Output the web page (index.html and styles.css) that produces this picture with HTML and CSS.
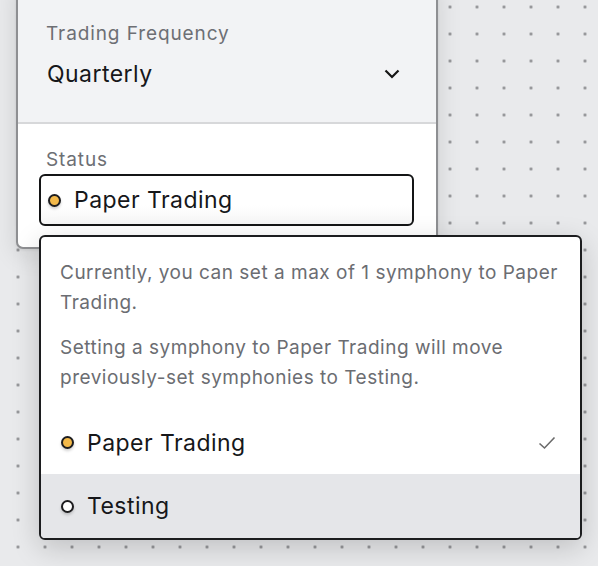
FILE: index.html
```html
<!DOCTYPE html>
<html>
<head>
<meta charset="utf-8">
<link rel="stylesheet" href="styles.css">
</head>
<body>
<div class="canvas">
  <div class="panel">
    <div class="section section-top">
      <div class="label">Trading Frequency</div>
      <div class="plain-select">
        <span class="value">Quarterly</span>
        <svg class="chevron" width="16" height="10" viewBox="0 0 16 10"><path d="M1.5 1.5 L8 8 L14.5 1.5" fill="none" stroke="#151515" stroke-width="2.2"/></svg>
      </div>
    </div>
    <div class="section section-bottom">
      <div class="label">Status</div>
      <div class="status-wrap">
        <div class="status-select">
          <span class="dot dot-paper"></span>
          <span class="value">Paper Trading</span>
        </div>
        <div class="popover">
          <div class="notes">
            <p>Currently, you can set a max of 1 symphony to Paper Trading.</p>
            <p>Setting a symphony to Paper Trading will move <span class="nowrap">previously-set</span> symphonies to Testing.</p>
          </div>
          <div class="option">
            <span class="dot dot-paper"></span>
            <span class="value">Paper Trading</span>
            <svg class="check" width="18" height="14" viewBox="0 0 18 14"><path d="M1.5 7.5 L6.5 12 L16.5 1.5" fill="none" stroke="#6a6a6a" stroke-width="1.6"/></svg>
          </div>
          <div class="option option-hover">
            <span class="dot dot-testing"></span>
            <span class="value">Testing</span>
          </div>
        </div>
      </div>
    </div>
  </div>
</div>
</body>
</html>
```

FILE: styles.css
```css
* { box-sizing: border-box; }
html, body {
  margin: 0;
  padding: 0;
  height: 100%;
}
body {
  font-family: Inter, "Noto Sans", sans-serif;
  background-color: #e9eaec;
  background-image: radial-gradient(circle, #8d8e91 1.1px, rgba(141,142,145,0) 1.8px);
  background-size: 27px 27px;
  background-position: 4.5px -6.5px;
  overflow: hidden;
}
.canvas {
  padding-left: 16px;
}
.panel {
  width: 422px;
  margin-top: -20px;
  border: 2px solid #8e8f92;
  border-radius: 7px;
  background: #fff;
  box-shadow: 0 6px 24px rgba(0,0,0,0.12), 0 1px 3px rgba(0,0,0,0.08);
  position: relative;
}
.section-top {
  background: #f2f3f5;
  border-bottom: 2px solid #d7d8da;
  padding: 39px 36px 0 28px;
  height: 142px;
  border-radius: 5px 5px 0 0;
}
.label {
  font-size: 19px;
  color: #6d6f74;
  letter-spacing: 0.9px;
  line-height: 26px;
}
.section-top .label {
  margin-bottom: 13px;
}
.plain-select {
  display: flex;
  align-items: center;
  justify-content: space-between;
  height: 28px;
}
.value {
  font-size: 23px;
  color: #16171a;
  letter-spacing: 0.45px;
}
.plain-select .value { margin-left: 1px; }
.chevron { margin-right: 0; }
.section-bottom {
  padding: 23px 22px 21px 21px;
  border-radius: 0 0 5px 5px;
}
.section-bottom .label {
  padding-left: 7px;
  margin-bottom: 1px;
}
.status-wrap {
  position: relative;
}
.status-select {
  height: 52px;
  border: 2px solid #141516;
  border-radius: 6px;
  display: flex;
  align-items: center;
  padding-left: 7px;
  background: linear-gradient(#fff 60%, #f6f6f6);
}
.dot {
  width: 13px;
  height: 13px;
  border-radius: 50%;
  border: 2px solid #1d1d1f;
  margin-right: 13px;
  box-shadow: 0 2px 3px rgba(0,0,0,0.18);
  flex: none;
}
.dot-paper { background: #f3b94a; }
.dot-testing { background: #fff; }
.popover {
  position: absolute;
  top: calc(100% + 9px);
  left: 0;
  width: 543px;
  background: #fff;
  border: 2px solid #1c1d1f;
  border-radius: 6px;
  box-shadow: 0 8px 28px rgba(0,0,0,0.18);
  overflow: hidden;
  z-index: 2;
}
.notes {
  padding: 21px 20px 18px 19px;
}
.notes p {
  margin: 0;
  font-size: 19px;
  line-height: 30px;
  color: #6b6d72;
  letter-spacing: 0.5px;
}
.notes p + p { margin-top: 15px; }
.nowrap { white-space: nowrap; }
.option {
  height: 63px;
  display: flex;
  align-items: center;
  padding: 0 24px 0 20px;
}
.option:last-child { height: 64px; }
.option .value { flex: 1; }
.option-hover { background: #e5e6e9; }
.check { flex: none; }
```
